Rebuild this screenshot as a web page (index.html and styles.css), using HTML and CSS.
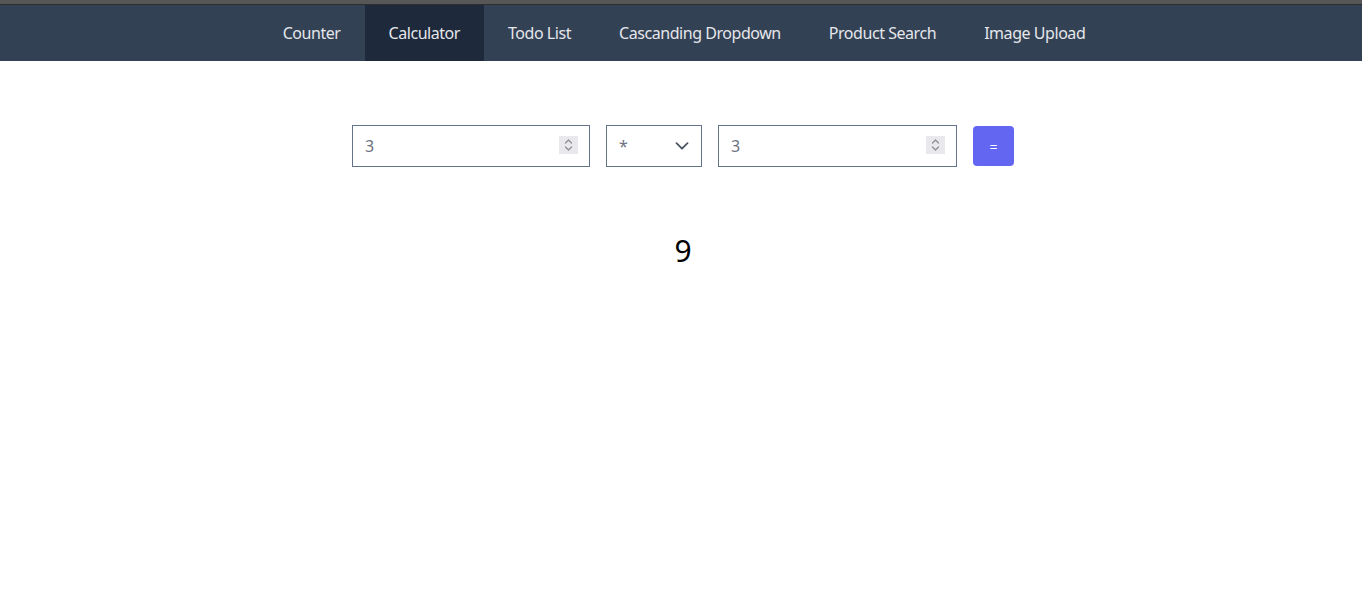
FILE: index.html
```html
<!DOCTYPE html>
<html lang="en">
<head>
<meta charset="utf-8">
<title>Calculator</title>
<link rel="stylesheet" href="styles.css">
</head>
<body>
<div class="topstrip"></div>
<nav class="nav">
  <a class="nav-item">Counter</a>
  <a class="nav-item active">Calculator</a>
  <a class="nav-item">Todo List</a>
  <a class="nav-item">Cascanding Dropdown</a>
  <a class="nav-item">Product Search</a>
  <a class="nav-item">Image Upload</a>
</nav>
<main class="main">
  <div class="calc-row">
    <div class="num-wrap first">
      <input class="num-input" type="number" value="3">
      <span class="spinner"><svg width="9" height="14" viewBox="0 0 9 14" fill="none" stroke="#8b8b92" stroke-width="1.2" stroke-linecap="round" stroke-linejoin="round"><path d="M1.5 5l3-3 3 3"/><path d="M1.5 9l3 3 3-3"/></svg></span>
    </div>
    <div class="select-wrap">
      <select class="op-select">
        <option>*</option>
        <option>+</option>
        <option>-</option>
        <option>/</option>
      </select>
      <svg class="chevron" width="14" height="8" viewBox="0 0 14 8" fill="none" stroke="#4b5563" stroke-width="1.8" stroke-linecap="round" stroke-linejoin="round"><path d="M1.5 1.2l5.5 5.5 5.5-5.5"/></svg>
    </div>
    <div class="num-wrap">
      <input class="num-input" type="number" value="3">
      <span class="spinner"><svg width="9" height="14" viewBox="0 0 9 14" fill="none" stroke="#8b8b92" stroke-width="1.2" stroke-linecap="round" stroke-linejoin="round"><path d="M1.5 5l3-3 3 3"/><path d="M1.5 9l3 3 3-3"/></svg></span>
    </div>
    <button class="eq-btn">=</button>
  </div>
  <div class="result">9</div>
</main>
</body>
</html>
```
FILE: styles.css
```css
* { box-sizing: border-box; }
html, body { margin: 0; padding: 0; background: #fff; }
body { font-family: "Noto Sans", sans-serif; color: #000; }

.topstrip {
  height: 5px;
  background: #575757;
  border-bottom: 1px solid #2d2d2d;
}

.nav {
  display: flex;
  justify-content: center;
  background: #334155;
  height: 56px;
  padding-left: 6px;
}
.nav-item {
  display: block;
  padding: 16px 24px;
  line-height: 24px;
  font-size: 16px;
  letter-spacing: -0.45px;
  color: #e5e7eb;
  text-decoration: none;
}
.nav-item.active { background: #1e293b; }

.main {
  display: flex;
  flex-direction: column;
  align-items: center;
  padding-top: 64px;
  padding-left: 4px;
}
.calc-row {
  display: flex;
  align-items: center;
  gap: 16px;
}
.num-wrap {
  position: relative;
  width: 239px;
  height: 42px;
}
.num-wrap.first { width: 238px; }
.num-input {
  width: 100%;
  height: 100%;
  border: 1px solid #64748b;
  border-radius: 0;
  padding: 0 12px;
  font-family: "Noto Sans", sans-serif;
  font-size: 16px;
  color: #6b7280;
  outline: none;
  background: #fff;
  -moz-appearance: textfield;
}
.num-input::-webkit-inner-spin-button,
.num-input::-webkit-outer-spin-button {
  -webkit-appearance: none;
  margin: 0;
}
.spinner {
  position: absolute;
  right: 12px;
  top: 11px;
  width: 19px;
  height: 18px;
  background: #e9e9ed;
  display: flex;
  align-items: center;
  justify-content: center;
  pointer-events: none;
}
.select-wrap {
  position: relative;
  width: 96px;
  height: 42px;
}
.op-select {
  appearance: none;
  -webkit-appearance: none;
  width: 100%;
  height: 100%;
  border: 1px solid #64748b;
  border-radius: 0;
  background: #fff;
  padding: 0 12px;
  font-family: "Noto Sans", sans-serif;
  font-size: 16px;
  color: #6b7280;
  outline: none;
}
.chevron {
  position: absolute;
  right: 13px;
  top: 17px;
  pointer-events: none;
}
.eq-btn {
  width: 41px;
  height: 40px;
  border: none;
  border-radius: 4px;
  background: #6366f1;
  color: #fff;
  font-family: "Noto Sans", sans-serif;
  font-size: 14px;
  padding: 0;
}
.result {
  margin-top: 66px;
  font-size: 30px;
  line-height: 36px;
}
```
